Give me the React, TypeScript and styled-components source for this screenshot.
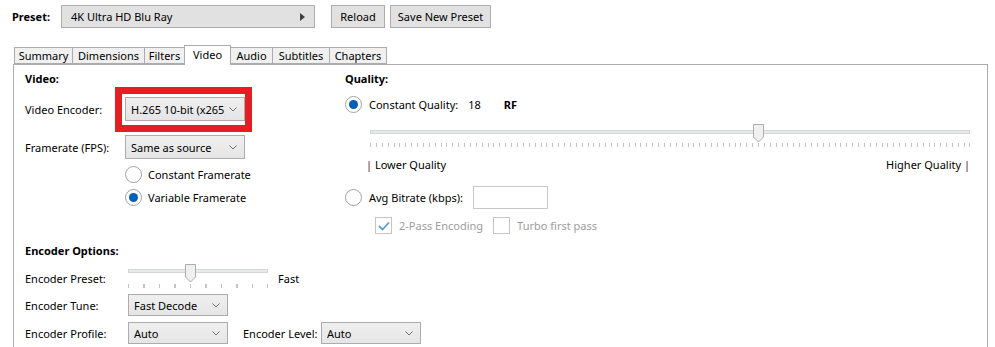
import React from "react";
import styled, { createGlobalStyle } from "styled-components";

const Global = createGlobalStyle`
  html, body { margin: 0; padding: 0; background: #fff; }
  body { font-family: "Noto Sans", "Open Sans", sans-serif; font-size: 11px; color: #000; overflow: hidden; }
  * { box-sizing: border-box; }
`;

const Page = styled.div`
  width: 995px;
  height: 347px;
  overflow: hidden;
  background: #fff;
`;

const TopBar = styled.div`
  display: flex;
  align-items: center;
  padding: 5px 0 0 12px;
  height: 28px;
`;

const PresetLabel = styled.span`
  font-weight: 700;
  width: 49px;
`;

const PresetCombo = styled.div`
  width: 254px;
  height: 23px;
  background: #e1e1e1;
  border: 1px solid #adadad;
  display: flex;
  align-items: center;
  justify-content: space-between;
  padding: 0 9px 0 9px;
`;

const Button = styled.div<{ $w: number; $ml: number }>`
  width: ${(p) => p.$w}px;
  margin-left: ${(p) => p.$ml}px;
  height: 23px;
  background: #e1e1e1;
  border: 1px solid #adadad;
  display: flex;
  align-items: center;
  justify-content: center;
`;

const TabStrip = styled.div`
  display: flex;
  align-items: flex-end;
  margin-top: 16px;
  padding-left: 14px;
  height: 20px;
  position: relative;
  z-index: 1;
`;

const Tab = styled.div<{ $w: number; $active?: boolean }>`
  width: ${(p) => p.$w}px;
  height: ${(p) => (p.$active ? 20 : 17)}px;
  margin-left: -1px;
  margin-bottom: ${(p) => (p.$active ? -1 : 0)}px;
  background: ${(p) => (p.$active ? "#fff" : "#f0f0f0")};
  border: 1px solid #acacac;
  border-bottom: ${(p) => (p.$active ? "none" : "1px solid #acacac")};
  display: flex;
  align-items: center;
  justify-content: center;
  padding-bottom: ${(p) => (p.$active ? 3 : 0)}px;
  white-space: nowrap;
  &:first-child { margin-left: 0; }
`;

const Panel = styled.div`
  margin-left: 13px;
  width: 975px;
  height: 300px;
  border: 1px solid #acacac;
  border-bottom: none;
  display: grid;
  grid-template-columns: 320px 1fr;
  padding: 5px 0 0 11px;
`;

const Column = styled.div`
  display: flex;
  flex-direction: column;
`;

const SectionTitle = styled.div<{ $mt?: number }>`
  font-weight: 700;
  height: 18px;
  line-height: 18px;
  margin-top: ${(p) => p.$mt ?? 0}px;
`;

const FormRow = styled.div<{ $mt: number; $h: number }>`
  display: flex;
  align-items: center;
  margin-top: ${(p) => p.$mt}px;
  height: ${(p) => p.$h}px;
  white-space: nowrap;
`;

const Label = styled.span<{ $w: number; $ml?: number }>`
  width: ${(p) => p.$w}px;
  margin-left: ${(p) => p.$ml ?? 0}px;
  flex: none;
`;

const ComboBox = styled.div<{ $w: number; $h: number }>`
  position: relative;
  width: ${(p) => p.$w}px;
  height: ${(p) => p.$h}px;
  background: linear-gradient(#efefef, #e5e5e5);
  border: 1px solid #acacac;
  display: flex;
  align-items: center;
  justify-content: space-between;
  padding: 0 7px 0 5px;
  white-space: nowrap;
  flex: none;
`;

const ComboText = styled.span`
  overflow: hidden;
  flex: 1;
`;

const Highlight = styled.div`
  position: absolute;
  top: -11px;
  left: -11px;
  right: -8px;
  bottom: -12px;
  border: 7px solid #e81c24;
  pointer-events: none;
`;

const Chevron = () => (
  <svg width="8" height="5" viewBox="0 0 8 5" style={{ flex: "none", marginLeft: 4 }}>
    <path d="M0.5 0.5 L4 4 L7.5 0.5" fill="none" stroke="#707070" strokeWidth="1" />
  </svg>
);

const RadioRow = styled.div<{ $mt: number; $ml: number }>`
  display: flex;
  align-items: center;
  height: 23px;
  margin-top: ${(p) => p.$mt}px;
  margin-left: ${(p) => p.$ml}px;
  gap: 6px;
`;

const RadioCircle = styled.span<{ $checked?: boolean }>`
  width: 17px;
  height: 17px;
  border-radius: 50%;
  border: 1px solid #a2a2a2;
  background: #fff;
  display: flex;
  align-items: center;
  justify-content: center;
  flex: none;
  &::after {
    content: "";
    width: 9px;
    height: 9px;
    border-radius: 50%;
    background: ${(p) => (p.$checked ? "#005fb8" : "transparent")};
  }
`;

const SliderBox = styled.div<{ $w: number }>`
  position: relative;
  width: ${(p) => p.$w}px;
  height: 25px;
  flex: none;
`;

const Track = styled.div<{ $top: number }>`
  position: absolute;
  left: 0;
  right: 0;
  top: ${(p) => p.$top}px;
  height: 4px;
  background: #e7eaea;
  border: 1px solid #d6d6d6;
`;

const Ticks = styled.div<{ $top: number; $step: number }>`
  position: absolute;
  left: 0;
  right: 0;
  top: ${(p) => p.$top}px;
  height: 4px;
  background: repeating-linear-gradient(
    to right,
    #c4c4c4 0 1px,
    transparent 1px ${(p) => p.$step}px
  );
  &::after {
    content: "";
    position: absolute;
    right: 0;
    top: 0;
    width: 1px;
    height: 4px;
    background: #c4c4c4;
  }
`;

const Thumb = styled.svg`
  position: absolute;
  top: 0;
`;

function Slider({ width, pos, tickStep, trackTop, tickTop }: { width: number; pos: number; tickStep: number; trackTop: number; tickTop: number }) {
  const left = Math.round(pos * (width - 11));
  return (
    <SliderBox $w={width}>
      <Track $top={trackTop} />
      <Ticks $top={tickTop} $step={tickStep} />
      <Thumb width="12" height="19" viewBox="0 0 12 19" style={{ left }}>
        <path d="M0.5 0.5 H10.5 V13 L5.5 18 L0.5 13 Z" fill="#f0f0f0" stroke="#acacac" />
      </Thumb>
    </SliderBox>
  );
}

const QualityRow = styled.div<{ $mt: number; $h: number }>`
  display: flex;
  align-items: center;
  height: ${(p) => p.$h}px;
  margin-top: ${(p) => p.$mt}px;
`;

const Value = styled.span<{ $ml: number; $bold?: boolean }>`
  margin-left: ${(p) => p.$ml}px;
  font-weight: ${(p) => (p.$bold ? 700 : 400)};
`;

const Indent = styled.div<{ $ml: number; $mt: number }>`
  margin-left: ${(p) => p.$ml}px;
  margin-top: ${(p) => p.$mt}px;
`;

const RangeLabels = styled.div`
  display: flex;
  justify-content: space-between;
  width: 604px;
  margin-left: 21px;
  margin-top: 7px;
  height: 18px;
  line-height: 18px;
`;

const Bar = styled.span`
  color: #5a1a30;
`;

const TextInput = styled.div`
  width: 75px;
  height: 23px;
  border: 1px solid #c9c9c9;
  background: #fff;
  margin-left: 10px;
`;

const CheckRow = styled.div`
  display: flex;
  align-items: center;
  height: 17px;
  margin-top: 9px;
  margin-left: 30px;
  color: #9d9d9d;
`;

const CheckBox = styled.span<{ $ml?: number }>`
  width: 17px;
  height: 17px;
  border: 1px solid #c4c4c4;
  background: #fff;
  display: flex;
  align-items: center;
  justify-content: center;
  margin-left: ${(p) => p.$ml ?? 0}px;
  margin-right: 7px;
  flex: none;
`;

const PresetRow = styled.div`
  display: flex;
  align-items: flex-start;
  margin-top: 4px;
  height: 27px;
`;

const PresetLbl = styled.span`
  width: 103px;
  margin-top: 7px;
`;

const FastText = styled.span`
  margin-left: 10px;
  margin-top: 7px;
`;

export default function App() {
  return (
    <Page>
      <Global />
      <TopBar>
        <PresetLabel>Preset:</PresetLabel>
        <PresetCombo>
          <span>4K Ultra HD Blu Ray</span>
          <svg width="5" height="8" viewBox="0 0 5 8">
            <path d="M0 0 L5 4 L0 8 Z" fill="#404040" />
          </svg>
        </PresetCombo>
        <Button $w={54} $ml={16}>Reload</Button>
        <Button $w={101} $ml={5}>Save New Preset</Button>
      </TopBar>
      <TabStrip>
        <Tab $w={59}>Summary</Tab>
        <Tab $w={73}>Dimensions</Tab>
        <Tab $w={41}>Filters</Tab>
        <Tab $w={47} $active>Video</Tab>
        <Tab $w={43}>Audio</Tab>
        <Tab $w={58}>Subtitles</Tab>
        <Tab $w={58}>Chapters</Tab>
      </TabStrip>
      <Panel>
        <Column>
          <SectionTitle>Video:</SectionTitle>
          <FormRow $mt={9} $h={24}>
            <Label $w={100}>Video Encoder:</Label>
            <ComboBox $w={120} $h={24}>
              <ComboText>H.265 10-bit (x265)</ComboText>
              <Chevron />
              <Highlight />
            </ComboBox>
          </FormRow>
          <FormRow $mt={14} $h={24}>
            <Label $w={100}>Framerate (FPS):</Label>
            <ComboBox $w={120} $h={24}>
              <ComboText>Same as source</ComboText>
              <Chevron />
            </ComboBox>
          </FormRow>
          <RadioRow $mt={4} $ml={100}>
            <RadioCircle />
            <span>Constant Framerate</span>
          </RadioRow>
          <RadioRow $mt={0} $ml={100}>
            <RadioCircle $checked />
            <span>Variable Framerate</span>
          </RadioRow>
          <SectionTitle $mt={33}>Encoder Options:</SectionTitle>
          <PresetRow>
            <PresetLbl>Encoder Preset:</PresetLbl>
            <Slider width={140} pos={4 / 9} tickStep={15.5} trackTop={5} tickTop={20} />
            <FastText>Fast</FastText>
          </PresetRow>
          <FormRow $mt={3} $h={22}>
            <Label $w={103}>Encoder Tune:</Label>
            <ComboBox $w={100} $h={22}>
              <ComboText>Fast Decode</ComboText>
              <Chevron />
            </ComboBox>
          </FormRow>
          <FormRow $mt={6} $h={22}>
            <Label $w={103}>Encoder Profile:</Label>
            <ComboBox $w={100} $h={22}>
              <ComboText>Auto</ComboText>
              <Chevron />
            </ComboBox>
            <Label $w={78} $ml={15}>Encoder Level:</Label>
            <ComboBox $w={100} $h={22}>
              <ComboText>Auto</ComboText>
              <Chevron />
            </ComboBox>
          </FormRow>
        </Column>
        <Column>
          <SectionTitle>Quality:</SectionTitle>
          <QualityRow $mt={7} $h={18}>
            <RadioCircle $checked />
            <Value $ml={7}>Constant Quality:</Value>
            <Value $ml={10}>18</Value>
            <Value $ml={23} $bold>RF</Value>
          </QualityRow>
          <Indent $ml={25} $mt={11}>
            <Slider width={600} pos={0.65} tickStep={5.88} trackTop={6} tickTop={19} />
          </Indent>
          <RangeLabels>
            <span><Bar>|</Bar> Lower Quality</span>
            <span>Higher Quality <Bar>|</Bar></span>
          </RangeLabels>
          <QualityRow $mt={12} $h={22}>
            <RadioCircle />
            <Value $ml={7}>Avg Bitrate (kbps):</Value>
            <TextInput />
          </QualityRow>
          <CheckRow>
            <CheckBox>
              <svg width="12" height="10" viewBox="0 0 12 10">
                <path d="M1 5 L4.5 8.5 L11 1.5" fill="none" stroke="#5b9bd5" strokeWidth="1.8" />
              </svg>
            </CheckBox>
            <span>2-Pass Encoding</span>
            <CheckBox $ml={10} />
            <span>Turbo first pass</span>
          </CheckRow>
        </Column>
      </Panel>
    </Page>
  );
}
